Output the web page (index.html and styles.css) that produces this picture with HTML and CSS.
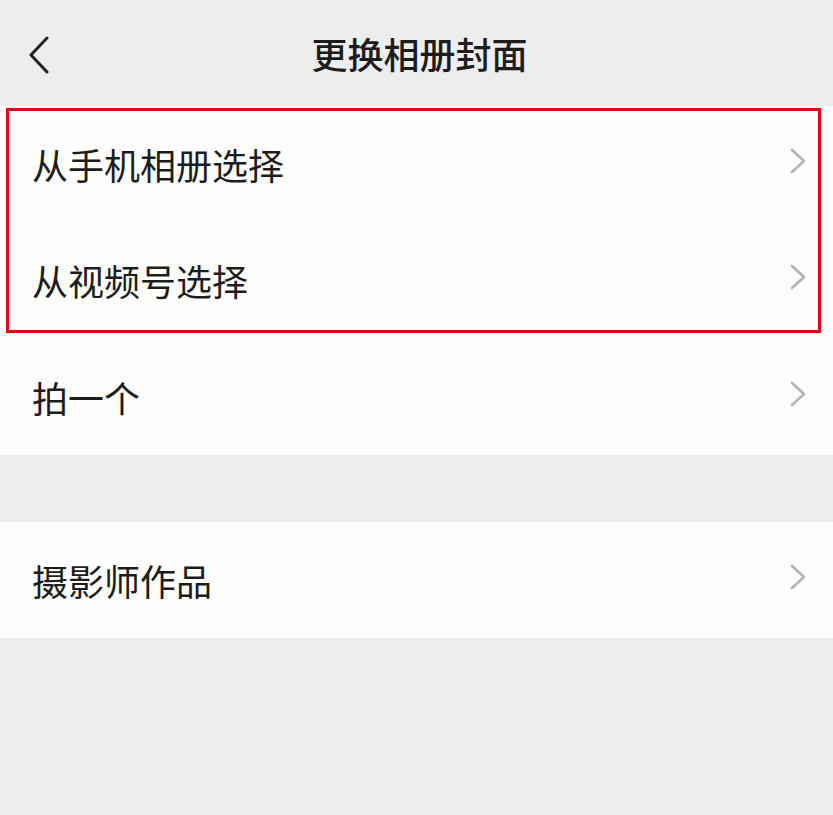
FILE: index.html
```html
<!DOCTYPE html>
<html lang="zh-CN">
<head>
    <meta charset="UTF-8">
    <title>更换相册封面</title>
    <link rel="stylesheet" href="styles.css">
</head>
<body>

    <!-- Top bar -->
    <div class="top-bar">
        <div class="back-button">
            <svg width="22" height="38" viewBox="0 0 22 38">
                <polyline points="19,2 3,19 19,36" fill="none" stroke="#222" stroke-width="3" stroke-linecap="round" stroke-linejoin="round"/>
            </svg>
        </div>
        <h1 class="title">更换相册封面</h1>
    </div>

    <!-- First group -->
    <div class="group">
        <div class="highlight"></div>
        <div class="row">
            <span class="label">从手机相册选择</span>
            <svg class="arrow" width="18" height="28" viewBox="0 0 18 28"><polyline points="3,3 15,14 3,25" fill="none" stroke="#b3b3b3" stroke-width="2.6" stroke-linecap="round" stroke-linejoin="round"/></svg>
        </div>
        <div class="row">
            <span class="label">从视频号选择</span>
            <svg class="arrow" width="18" height="28" viewBox="0 0 18 28"><polyline points="3,3 15,14 3,25" fill="none" stroke="#b3b3b3" stroke-width="2.6" stroke-linecap="round" stroke-linejoin="round"/></svg>
        </div>
        <div class="row">
            <span class="label">拍一个</span>
            <svg class="arrow" width="18" height="28" viewBox="0 0 18 28"><polyline points="3,3 15,14 3,25" fill="none" stroke="#b3b3b3" stroke-width="2.6" stroke-linecap="round" stroke-linejoin="round"/></svg>
        </div>
    </div>

    <!-- Second group -->
    <div class="group">
        <div class="row">
            <span class="label">摄影师作品</span>
            <svg class="arrow" width="18" height="28" viewBox="0 0 18 28"><polyline points="3,3 15,14 3,25" fill="none" stroke="#b3b3b3" stroke-width="2.6" stroke-linecap="round" stroke-linejoin="round"/></svg>
        </div>
    </div>

</body>
</html>
```

FILE: styles.css
```css
body {
    margin: 0;
    background-color: #ededed;
    font-family: "Noto Sans CJK SC", "Noto Sans", sans-serif;
    color: #1c1c1c;
    height: 815px;
}
.top-bar {
    height: 106px;
    display: flex;
    align-items: center;
    justify-content: center;
    position: relative;
}
.back-button {
    position: absolute;
    left: 28px;
    top: 36px;
    line-height: 0;
}
.title {
    margin: 0 0 0 6px;
    font-size: 36px;
    font-weight: 500;
}
.group {
    background-color: #fdfdfb;
    position: relative;
    margin-bottom: 67px;
}
.row {
    height: 116.3px;
    display: flex;
    align-items: center;
    justify-content: space-between;
    padding: 0 26px 0 32px;
    font-size: 36px;
}
.arrow {
    margin-top: -6px;
}
.highlight {
    position: absolute;
    left: 6px;
    top: 2px;
    width: 809px;
    height: 219px;
    border: 3px solid #e3001b;
}
```
